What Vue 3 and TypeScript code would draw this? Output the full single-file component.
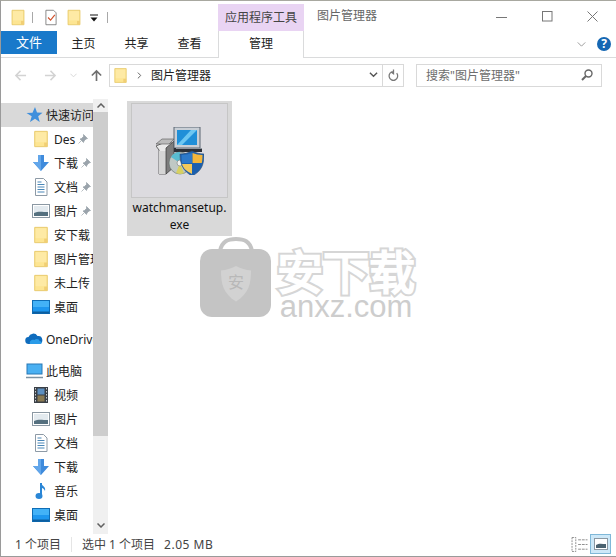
<template>
  <div class="window">
    <!-- 图标定义 -->
    <svg class="defs" width="0" height="0">
      <defs>
        <symbol id="i-folder" viewBox="0 0 16 20">
          <path d="M1 1.500h14v17H1z" fill="#fde592" stroke="#e6c766" />
          <path d="M11.500 14h3.500v4.500h-3.500z" fill="#f1cf75" />
          <path d="M2 2.500h12v11H2z" fill="#fff0b8" opacity=".5" />
        </symbol>
        <symbol id="i-down" viewBox="0 0 18 18">
          <path d="M6 1h6v7h5l-8 9-8-9h5z" fill="#3f8bdc" />
          <path d="M6 1h3v16l-8-9h5z" fill="#62a6ea" />
        </symbol>
        <symbol id="i-doc" viewBox="0 0 18 18">
          <path d="M3.500 .5h8l3.500 3.500v13.500h-11.500z" fill="#fff" stroke="#8d9aa6" />
          <path d="M5.500 4h4M5.500 6.500h7M5.500 9h7M5.500 11.500h7M5.500 14h7" stroke="#4a87b8" />
        </symbol>
        <symbol id="i-pic" viewBox="0 0 18 18">
          <rect x=".5" y="2.500" width="17" height="13" fill="#fff" stroke="#8b98a3" />
          <rect x="2" y="4" width="14" height="10" fill="#e3eaef" />
          <path d="M2 11c4-2 8-1 14-1v4H2z" fill="#55707f" />
        </symbol>
        <symbol id="i-desk" viewBox="0 0 18 18">
          <rect x=".5" y="2.500" width="17" height="13" fill="#1e97ef" stroke="#0f6db5" />
          <path d="M1 13.500h16v2H1z" fill="#0d5e9f" />
          <path d="M1 3h16v6H1z" fill="#43b2f7" />
        </symbol>
        <symbol id="i-pin" viewBox="0 0 10 10">
          <path d="M5.500 .5l4 4-1.500.5-2 2-.5 1.500-3.500-3.500 1.500-.5 2-2zM3 7L.5 9.500" fill="#9aa3ab" stroke="#9aa3ab" stroke-width=".7" />
        </symbol>
      </defs>
    </svg>

    <!-- 标题栏 -->
    <div class="titlebar">
      <div class="quick">
        <svg class="qa-icon"><use href="#i-folder" /></svg>
        <span class="qa-sep" />
        <svg class="qa-icon" viewBox="0 0 16 20">
          <path d="M2 1.500h9l3 3v14H2z" fill="#fff" stroke="#777" />
          <path d="M4.500 10l3 3 5-6" fill="none" stroke="#d0512c" stroke-width="1.400" />
        </svg>
        <svg class="qa-icon qa-gap"><use href="#i-folder" /></svg>
        <svg class="qa-drop" viewBox="0 0 8 8">
          <path d="M0 1h8" stroke="#111" />
          <path d="M.5 3.500h7L4 7.500z" fill="#111" />
        </svg>
        <span class="qa-sep qa-sep-last" />
      </div>
      <div class="tool-head">应用程序工具</div>
      <div class="title">图片管理器</div>
      <div class="win-btns">
        <svg viewBox="0 0 11 11"><path d="M0 6.500h11" stroke="#777" /></svg>
        <svg viewBox="0 0 11 11"><rect x=".5" y=".5" width="9.500" height="9.500" fill="none" stroke="#777" /></svg>
        <svg viewBox="0 0 11 11"><path d="M.5 .5l10 10M10.500 .5l-10 10" stroke="#777" /></svg>
      </div>
    </div>

    <!-- 选项卡 -->
    <div class="ribbon">
      <div class="tab-file">文件</div>
      <div v-for="t in tabs" :key="t" class="tab">{{ t }}</div>
      <div class="tab-manage">管理</div>
      <svg class="ribbon-chev" viewBox="0 0 10 6"><path d="M.5 .5L5 5 9.500 .5" fill="none" stroke="#8a8a8a" /></svg>
      <div class="help">?</div>
    </div>

    <!-- 地址栏 -->
    <div class="navbar">
      <svg class="nav-arrow" viewBox="0 0 14 14"><path d="M13 7H2M7 2L2 7l5 5" fill="none" stroke="#d3d3d3" stroke-width="1.600" /></svg>
      <svg class="nav-arrow fwd" viewBox="0 0 14 14"><path d="M1 7h11M7 2l5 5-5 5" fill="none" stroke="#d3d3d3" stroke-width="1.600" /></svg>
      <svg class="nav-small" viewBox="0 0 8 5"><path d="M.5 .5L4 4 7.500 .5" fill="none" stroke="#d3d3d3" /></svg>
      <svg class="nav-up" viewBox="0 0 14 14"><path d="M7 13V2M2 7l5-5 5 5" fill="none" stroke="#6f6f6f" stroke-width="1.800" /></svg>
      <div class="address">
        <svg class="addr-folder"><use href="#i-folder" /></svg>
        <svg class="addr-chev" viewBox="0 0 6 8"><path d="M1 .5L4.500 4 1 7.500" fill="none" stroke="#666" stroke-width="1.200" /></svg>
        <span class="addr-text">图片管理器</span>
        <svg class="addr-drop" viewBox="0 0 10 6"><path d="M1 .5l4 4 4-4" fill="none" stroke="#555" stroke-width="1.500" /></svg>
        <span class="addr-refresh">
          <svg viewBox="0 0 12 14"><path d="M9.500 4.500a4.700 4.700 0 1 1-3.500-1.700M6 .5v4.500L3 2.800" fill="none" stroke="#777" stroke-width="1.400" /></svg>
        </span>
      </div>
      <div class="search">
        <span>搜索"图片管理器"</span>
        <svg viewBox="0 0 12 12"><circle cx="7.500" cy="4.500" r="3.500" fill="none" stroke="#666" stroke-width="1.400" /><path d="M5 7L1 11" stroke="#666" stroke-width="2" /></svg>
      </div>
    </div>

    <!-- 主体 -->
    <div class="main">
      <div class="sidebar">
        <div
          v-for="row in navRows"
          :key="row.id"
          class="nav-row"
          :class="{ top: row.top, active: row.active, spaced: row.spaced }"
        >
          <svg v-if="row.icon === 'star'" class="nav-icon" viewBox="0 0 18 18">
            <path d="M10 1l2 5.500 5.500.3-4.300 3.500 1.500 5.700-4.700-3.200-5 3.200 1.700-5.700L1.500 7l6-.3z" fill="#3f8fdc" />
          </svg>
          <svg v-else-if="row.icon === 'cloud'" class="nav-icon" viewBox="0 0 18 18">
            <path d="M4 14a3.500 3.500 0 0 1-.5-7A5 5 0 0 1 12.500 6a4 4 0 0 1 1.500 8z" fill="#0f6cbd" />
            <path d="M5 14c-1-3 2-5 4.500-4 1.500-2 5-1 5 1 2.500 0 3 3 1 3z" fill="#2a9be8" />
          </svg>
          <svg v-else-if="row.icon === 'pc'" class="nav-icon" viewBox="0 0 18 18">
            <rect x="2" y="2" width="15" height="10" fill="#4ab0f2" stroke="#2878b5" />
            <path d="M1 15.500h17" stroke="#7d93a3" stroke-width="1.500" />
          </svg>
          <svg v-else-if="row.icon === 'video'" class="nav-icon" viewBox="0 0 18 18">
            <rect x="2" y="1" width="14" height="16" fill="#3a3f46" />
            <rect x="5.500" y="2.500" width="7" height="6" fill="#5d8fc0" />
            <rect x="5.500" y="9.500" width="7" height="6" fill="#8a7a52" />
            <path d="M3.500 2v14M14.500 2v14" stroke="#c9ced3" stroke-dasharray="1.500 1.500" />
          </svg>
          <svg v-else-if="row.icon === 'music'" class="nav-icon" viewBox="0 0 18 18">
            <path d="M9 1v12" stroke="#2a86d6" stroke-width="2" />
            <ellipse cx="7" cy="14" rx="3.500" ry="3" fill="#2a86d6" />
            <path d="M9 1c1 3 5 3.500 4 8-1-2.500-2.500-3-4-3.500z" fill="#2a86d6" />
          </svg>
          <svg v-else class="nav-icon"><use :href="'#i-' + row.icon" /></svg>
          <span class="nav-label">{{ row.label }}</span>
          <svg v-if="row.pin" class="nav-pin"><use href="#i-pin" /></svg>
        </div>
      </div>

      <div class="scrollbar">
        <div class="sb-up"><svg viewBox="0 0 8 5"><path d="M.5 4.500L4 1l3.500 3.500" fill="none" stroke="#606060" stroke-width="1.500" /></svg></div>
        <div class="sb-thumb" />
        <div class="sb-rest" />
        <div class="sb-down"><svg viewBox="0 0 8 5"><path d="M.5 .5L4 4l3.500-3.500" fill="none" stroke="#606060" stroke-width="1.500" /></svg></div>
      </div>

      <div class="files">
        <div class="file-item">
          <div class="file-thumb">
            <svg width="48" height="48" viewBox="0 0 48 48">
              <!-- 安装包盒子 -->
              <path d="M0 19l7-3h9v8l-6 2v21H3V23z" fill="#e9e9e9" stroke="#444" stroke-width=".8" />
              <path d="M3 24h7v23H3z" fill="#d5d5d5" />
              <path d="M10 21l8-7v26l-8 7z" fill="#7d7d7d" stroke="#333" stroke-width=".7" />
              <path d="M0 17l6-5h12l-5 5z" fill="#bcbcbc" stroke="#555" stroke-width=".6" />
              <!-- 显示器 -->
              <rect x="18" y="0" width="26" height="21" fill="#c9cfd6" stroke="#5b6672" />
              <rect x="21" y="3" width="20" height="15" fill="#1f8fd8" />
              <path d="M21 18l14-15h6L26 18z" fill="#6cc7f2" />
              <path d="M18 21h28v4H18z" fill="#2b2f36" />
              <path d="M20 22h26v-1H20z" fill="#8d949c" />
              <!-- 光盘 -->
              <circle cx="24" cy="36" r="11" fill="#bfc8c4" stroke="#5e6a66" stroke-width=".6" />
              <path d="M24 36L15 30a11 11 0 0 1 9-5z" fill="#59bcd0" />
              <path d="M24 36l-4 10a11 11 0 0 0 8 .2z" fill="#d7d060" />
              <circle cx="24" cy="36" r="3" fill="#eef1ef" stroke="#666" stroke-width=".5" />
              <!-- 盾牌 -->
              <path d="M36 24c4 2 8 3 12 3 0 10-2 17-12 22-9-5-12-12-12-22 4 0 8-1 12-3z" fill="#1e63b0" stroke="#2a4a72" stroke-width=".6" />
              <path d="M36 26v10H26c0-3-.4-5-.3-8 4-.2 7-.7 10.300-2z" fill="#2d79c9" />
              <path d="M36.500 26c3 1.300 6 1.800 10 2 0 3-.2 5-.7 8H36.500z" fill="#f3b63b" />
              <path d="M26 37h10v10c-6-3-9-6-10-10z" fill="#f4c95a" />
              <path d="M36.500 37h9c-1.500 4.500-4 8-9 10z" fill="#1c5fae" />
            </svg>
          </div>
          <div class="file-name">watchmansetup.<br />exe</div>
        </div>
      </div>

      <!-- 水印 -->
      <div class="watermark">
        <svg class="wm-bag" width="72" height="80" viewBox="0 0 72 80">
          <path d="M20 14C22 4 28 2 36 2s14 2 16 12" fill="none" stroke="#c4c4c4" stroke-width="4" />
          <rect x="0" y="12" width="71" height="68" rx="12" fill="#c4c4c4" />
          <path d="M36 29c5 2.500 10 4 15 4.500 0 13-2 23-15 31-13-8-15-18-15-31 5-.5 10-2 15-4.500z" fill="#d2d2d2" />
        </svg>
        <span class="wm-mark">安</span>
        <div class="wm-text">
          <div class="wm-cn" data-t="安下载">安下载</div>
          <div class="wm-en">anxz.com</div>
        </div>
      </div>
    </div>

    <!-- 状态栏 -->
    <div class="statusbar">
      <span>1 个项目</span>
      <span class="st-sep" />
      <span>选中 1 个项目</span>
      <span class="st-size">2.05 MB</span>
      <svg class="st-list" viewBox="0 0 18 16">
        <rect x=".5" y=".5" width="4" height="15" fill="none" stroke="#8a8a8a" stroke-dasharray="2 1" />
        <path d="M7 3h10M7 8h10M7 13h10" stroke="#8a8a8a" stroke-dasharray="3 1" />
      </svg>
      <div class="st-large">
        <svg viewBox="0 0 14 12"><rect x=".5" y=".5" width="13" height="11" fill="#fff" stroke="#8b98a3" /><path d="M2 7c3-2 6-1 10-1v4H2z" fill="#4a6270" /></svg>
      </div>
    </div>
  </div>
</template>

<script setup lang="ts">
interface NavRow {
  id: number
  label: string
  icon: string
  top?: boolean
  active?: boolean
  spaced?: boolean
  pin?: boolean
}

const tabs = ['主页', '共享', '查看']

const navRows: NavRow[] = [
  { id: 1, label: '快速访问', icon: 'star', top: true, active: true },
  { id: 2, label: 'Des', icon: 'folder', pin: true },
  { id: 3, label: '下载', icon: 'down', pin: true },
  { id: 4, label: '文档', icon: 'doc', pin: true },
  { id: 5, label: '图片', icon: 'pic', pin: true },
  { id: 6, label: '安下载', icon: 'folder' },
  { id: 7, label: '图片管理器', icon: 'folder' },
  { id: 8, label: '未上传', icon: 'folder' },
  { id: 9, label: '桌面', icon: 'desk' },
  { id: 10, label: 'OneDrive', icon: 'cloud', top: true, spaced: true },
  { id: 11, label: '此电脑', icon: 'pc', top: true, spaced: true },
  { id: 12, label: '视频', icon: 'video' },
  { id: 13, label: '图片', icon: 'pic' },
  { id: 14, label: '文档', icon: 'doc' },
  { id: 15, label: '下载', icon: 'down' },
  { id: 16, label: '音乐', icon: 'music' },
  { id: 17, label: '桌面', icon: 'desk' }
]
</script>

<style scoped>
.window {
  position: relative;
  width: 616px;
  height: 557px;
  box-sizing: border-box;
  border-top: 1px solid #a8a8a0;
  border-left: 1px solid #9a9a9a;
  display: flex;
  flex-direction: column;
  background: #fff;
  font-family: "Noto Sans", "Noto Sans CJK SC", sans-serif;
  font-size: 12px;
  color: #222;
  overflow: hidden;
}

.defs {
  position: absolute;
}

/* 标题栏 */
.titlebar {
  height: 30px;
  display: flex;
  flex-shrink: 0;
}

.quick {
  width: 217px;
  display: flex;
  align-items: center;
  padding: 3px 0 0 10px;
  box-sizing: border-box;
}

.qa-icon {
  width: 14px;
  height: 17px;
}

.qa-gap {
  margin-left: 8px;
  width: 16px;
}

.qa-sep {
  width: 1px;
  height: 11px;
  background: #a8a8a8;
  margin: 0 11px 0 7px;
}

.qa-sep-last {
  margin: 0 0 0 9px;
}

.qa-drop {
  width: 8px;
  height: 8px;
  margin-left: 8px;
}

.tool-head {
  width: 86px;
  margin-top: 3px;
  background: #e9d4f3;
  text-align: center;
  line-height: 28px;
  color: #444;
}

.title {
  margin-left: 13px;
  line-height: 30px;
  color: #666;
}

.win-btns {
  margin-left: auto;
  width: 120px;
  display: flex;
  align-items: center;
  padding-right: 18px;
  box-sizing: border-box;
  justify-content: space-between;
}

.win-btns svg {
  width: 11px;
  height: 11px;
}

/* 选项卡 */
.ribbon {
  height: 26px;
  display: flex;
  flex-shrink: 0;
  border-bottom: 1px solid #dadbdc;
  box-sizing: content-box;
}

.tab-file {
  width: 56px;
  height: 23px;
  background: #1979ca;
  color: #fff;
  text-align: center;
  line-height: 22px;
  font-size: 13px;
}

.tab {
  width: 53px;
  text-align: center;
  line-height: 26px;
}

.tab-manage {
  width: 84px;
  height: 27px;
  margin-left: 2px;
  background: #fff;
  border-left: 1px solid #dadbdc;
  border-right: 1px solid #dadbdc;
  text-align: center;
  line-height: 26px;
}

.ribbon-chev {
  width: 9px;
  height: 5px;
  margin: 11px 0 0 273px;
}

.help {
  width: 14px;
  height: 14px;
  margin: 6px 0 0 11px;
  border-radius: 50%;
  background: #1567b3;
  color: #fff;
  font-size: 12px;
  font-weight: 700;
  line-height: 14px;
  text-align: center;
}

/* 地址栏 */
.navbar {
  height: 41px;
  display: flex;
  align-items: center;
  flex-shrink: 0;
  padding: 0 0 7px 13px;
  box-sizing: border-box;
}

.nav-arrow {
  width: 13px;
  height: 13px;
}

.fwd {
  margin-left: 17px;
}

.nav-small {
  width: 7px;
  height: 5px;
  margin-left: 13px;
}

.nav-up {
  width: 13px;
  height: 13px;
  margin-left: 13px;
}

.address {
  width: 295px;
  height: 23px;
  margin-left: 6px;
  border: 1px solid #d9d9d9;
  box-sizing: border-box;
  display: flex;
  align-items: center;
  padding-left: 4px;
}

.addr-folder {
  width: 13px;
  height: 17px;
}

.addr-chev {
  width: 5px;
  height: 7px;
  margin-left: 10px;
}

.addr-text {
  margin-left: 9px;
}

.addr-drop {
  width: 9px;
  height: 6px;
  margin-left: auto;
  margin-right: 4px;
}

.addr-refresh {
  width: 20px;
  height: 21px;
  border-left: 1px solid #d9d9d9;
  display: flex;
  align-items: center;
  justify-content: center;
}

.addr-refresh svg {
  width: 11px;
  height: 13px;
}

.search {
  width: 186px;
  height: 23px;
  margin-left: 12px;
  border: 1px solid #d9d9d9;
  box-sizing: border-box;
  display: flex;
  align-items: center;
  justify-content: space-between;
  padding: 0 8px 0 9px;
  color: #6d6d6d;
}

.search svg {
  width: 12px;
  height: 12px;
}

/* 主体 */
.main {
  flex: 1;
  min-height: 0;
  display: flex;
  position: relative;
}

.sidebar {
  width: 92px;
  flex-shrink: 0;
  padding-top: 4px;
  overflow: hidden;
}

.nav-row {
  height: 24px;
  display: flex;
  align-items: center;
  gap: 4px;
  padding-left: 31px;
  white-space: nowrap;
  overflow: hidden;
}

.nav-row.top {
  padding-left: 24px;
  gap: 3px;
}

.nav-row.spaced {
  margin-top: 8px;
}

.nav-row.active {
  background: #d9d9d9;
}

.nav-icon {
  width: 18px;
  height: 18px;
  flex-shrink: 0;
}

.nav-pin {
  width: 10px;
  height: 10px;
  flex-shrink: 0;
  margin-left: -1px;
}

.scrollbar {
  width: 15px;
  flex-shrink: 0;
  display: flex;
  flex-direction: column;
  background: #f0f0f0;
}

.sb-up {
  height: 13px;
  display: flex;
  align-items: center;
  justify-content: center;
}

.sb-thumb {
  height: 324px;
  background: #cdcdcd;
}

.sb-rest {
  flex: 1;
}

.sb-down {
  height: 18px;
  display: flex;
  align-items: center;
  justify-content: center;
}

.sb-up svg,
.sb-down svg {
  width: 8px;
  height: 5px;
}

.files {
  flex: 1;
  padding: 2px 0 0 19px;
}

.file-item {
  width: 105px;
  height: 135px;
  background: #d9d9d9;
  box-sizing: border-box;
  padding: 2px 4px 0;
  text-align: center;
}

.file-thumb {
  height: 95px;
  box-sizing: border-box;
  border: 1px solid #c6c6c6;
  background: #dcdbdf;
  display: flex;
  align-items: center;
  justify-content: center;
}

.file-name {
  margin: 1px -4px 0;
  line-height: 17px;
  color: #111;
}

/* 水印 */
.watermark {
  position: absolute;
  left: 199px;
  top: 138px;
  display: flex;
  pointer-events: none;
}

.wm-bag {
  display: block;
}

.wm-mark {
  position: absolute;
  left: 28px;
  top: 32px;
  font-size: 16px;
  line-height: 26px;
  color: #b8b8b8;
}

.wm-text {
  margin-left: 4px;
  width: 140px;
  text-align: center;
}

.wm-cn {
  position: relative;
  font-size: 46px;
  line-height: 46px;
  margin-top: 11px;
  color: #d6d6d6;
  -webkit-text-stroke: 6px #d6d6d6;
  white-space: nowrap;
}

.wm-cn::after {
  content: attr(data-t);
  position: absolute;
  left: 0;
  right: 0;
  top: 0;
  color: #fff;
  -webkit-text-stroke: 2px #fff;
}

.wm-en {
  font-size: 31px;
  line-height: 24px;
  margin-top: 1px;
  color: #cdcdcd;
  font-family: "Liberation Sans", sans-serif;
}

/* 状态栏 */
.statusbar {
  height: 23px;
  flex-shrink: 0;
  border-bottom: 1px solid #9a9a9a;
  display: flex;
  align-items: center;
  padding: 0 5px 2px 14px;
  color: #444;
  box-sizing: border-box;
}

.st-sep {
  width: 1px;
  height: 15px;
  background: #e5e5e5;
  margin: 0 10px;
}

.st-size {
  margin-left: 9px;
  letter-spacing: .5px;
}

.st-list {
  width: 18px;
  height: 15px;
  margin-left: auto;
  margin-right: 1px;
}

.st-large {
  width: 21px;
  height: 20px;
  box-sizing: border-box;
  background: #cde8f8;
  border: 1px solid #7fb8d8;
  display: flex;
  align-items: center;
  justify-content: center;
}

.st-large svg {
  width: 14px;
  height: 12px;
}
</style>
